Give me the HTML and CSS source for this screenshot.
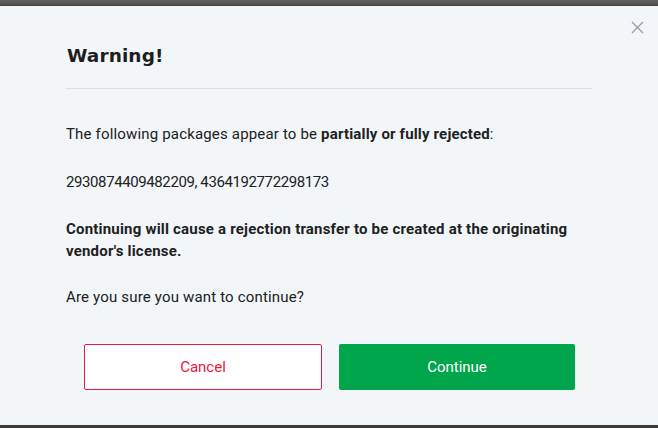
FILE: index.html
```html
<!DOCTYPE html>
<html lang="en">
<head>
  <meta charset="UTF-8" />
  <title>Warning</title>
  <link rel="stylesheet" href="styles.css">
</head>
<body>
  <div class="topbar"></div>
  <div class="modal">
    <button class="close" aria-label="Close">
      <svg width="13" height="13" viewBox="0 0 13 13"><path d="M1 1L12 12M12 1L1 12" stroke="#9a9ea2" stroke-width="1.4" fill="none"/></svg>
    </button>
    <div class="content">
      <h2 class="title">Warning!</h2>
      <p class="intro">The following packages appear to be <b>partially or fully rejected</b>:</p>
      <p class="ids">2930874409482209, 4364192772298173</p>
      <p class="strong">Continuing will cause a rejection transfer to be created at the originating vendor's license.</p>
      <p>Are you sure you want to continue?</p>
      <div class="actions">
        <button class="btn btn-cancel">Cancel</button>
        <button class="btn btn-continue">Continue</button>
      </div>
    </div>
  </div>
  <div class="bottombar"></div>
</body>
</html>
```

FILE: styles.css
```css
body {
  margin: 0;
  background-color: #3a3a3a;
  font-family: Roboto, "Liberation Sans", sans-serif;
  color: #212121;
  height: 428px;
  overflow: hidden;
}

.topbar {
  height: 6px;
  background: linear-gradient(#616161, #555 70%, #3c3c3c);
}

.modal {
  position: relative;
  height: 419px;
  background-color: #f2f6f9;
}

.close {
  position: absolute;
  top: 9px;
  right: 8px;
  background: none;
  border: none;
  padding: 6px;
  line-height: 0;
}

.content {
  padding: 24px 66px 0;
}

.title {
  font-family: "DejaVu Sans", sans-serif;
  font-weight: 700;
  font-size: 18.5px;
  letter-spacing: 0.1px;
  margin: 0;
  padding: 15px 1px 22px;
  border-bottom: 1px solid #dcdfe2;
  color: #1e1e1e;
}

p {
  font-size: 15px;
  line-height: 22px;
  letter-spacing: 0.17px;
  margin: 24px 0 0;
}

.intro {
  margin-top: 34px;
}

.ids {
  margin-top: 26px;
  letter-spacing: -0.4px;
}

.strong {
  font-weight: 700;
  letter-spacing: 0.2px;
  margin-top: 25px;
}

.actions {
  display: flex;
  gap: 17px;
  padding: 0 17px 0 18px;
  margin-top: 36px;
}

.btn {
  flex: 1;
  height: 46px;
  font-family: Roboto, sans-serif;
  font-size: 15px;
  border-radius: 2px;
}

.btn-cancel {
  background: #fff;
  color: #eb1641;
  border: 1px solid #eb1641;
}

.btn-continue {
  background: #00a54c;
  color: #fff;
  border: none;
}
```
